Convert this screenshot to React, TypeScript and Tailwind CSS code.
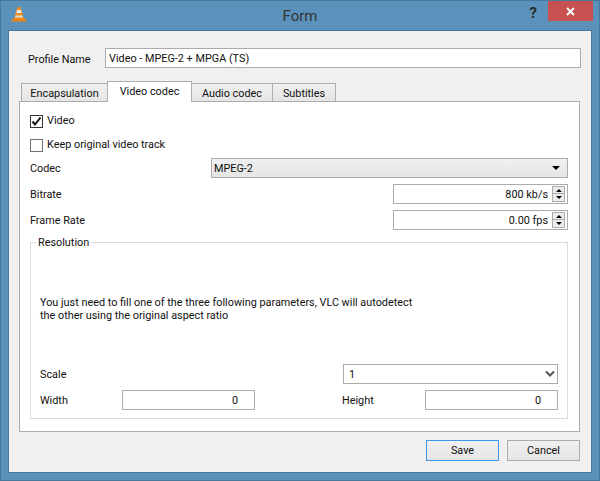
import { ReactNode } from "react"

const font = { fontFamily: 'Roboto, "Open Sans", sans-serif' }

function SpinArrows() {
  return (
    <div className="flex flex-col w-[13px] h-[16px] mr-[2px]">
      <div className="h-[8px] bg-[#ececec] border border-[#acacac] flex items-center justify-center">
        <div className="w-0 h-0 border-x-[3.5px] border-x-transparent border-b-[3px] border-b-black" />
      </div>
      <div className="h-[8px] bg-[#ececec] border border-t-0 border-[#acacac] flex items-center justify-center">
        <div className="w-0 h-0 border-x-[3.5px] border-x-transparent border-t-[3px] border-t-black" />
      </div>
    </div>
  )
}

function Spin({ value, width }: { value: string; width: string }) {
  return (
    <div className={`${width} h-[20px] border border-[#ababab] bg-white flex items-center justify-end`}>
      <span className="mr-[4px] pt-[2px]">{value}</span>
      <SpinArrows />
    </div>
  )
}

function Tab({ label, active, width }: { label: string; active?: boolean; width: string }) {
  if (active) {
    return (
      <div className={`${width} h-[21px] -ml-px relative z-10 bg-white border border-b-0 border-[#acacac] flex items-center justify-center`}>
        {label}
      </div>
    )
  }
  return (
    <div className={`${width} h-[19px] -ml-px bg-gradient-to-b from-[#f0f0f0] to-[#e5e5e5] border border-[#acacac] flex items-center justify-center pt-[3px]`}>
      {label}
    </div>
  )
}

function Check({ checked, children }: { checked?: boolean; children: ReactNode }) {
  return (
    <div className="flex items-center h-[20px]">
      <div className={`w-[13px] h-[13px] border ${checked ? "border-[#333]" : "border-[#707070]"} bg-white flex items-center justify-center mr-[4px]`}>
        {checked && (
          <svg width="11" height="11" viewBox="0 0 11 11">
            <path d="M1.5 5.5 L4 8.5 L9.5 1.5" fill="none" stroke="#111" strokeWidth="2" />
          </svg>
        )}
      </div>
      {children}
    </div>
  )
}

export default function App() {
  return (
    <div
      style={font}
      className="w-[600px] h-[481px] bg-[#5b92bc] border border-[#47799f] flex flex-col text-[10.85px] text-[#111] overflow-hidden"
    >
      {/* Title bar */}
      <div className="h-[29px] grid grid-cols-[1fr_auto_1fr] items-start shrink-0">
        <svg className="ml-[10px] mt-[5px]" width="16" height="17" viewBox="0 0 16 17">
          <path d="M6.5 1 L9.5 1 L13 13 L3 13 Z" fill="#f08a1d" />
          <path d="M6 4 L10 4 L10.7 7 L5.3 7 Z" fill="#e8e8e8" />
          <path d="M4.6 9.5 L11.4 9.5 L12 11.5 L4 11.5 Z" fill="#ddd" />
          <path d="M1 13 L15 13 L15.5 15.5 L0.5 15.5 Z" fill="#ee8210" />
        </svg>
        <div className="text-[15px] text-[#333] mt-[4px]">Form</div>
        <div className="flex justify-end">
          <div className="text-[15px] font-bold text-[#2b2b2b] mt-[2px] mr-[11px] leading-[20px]">?</div>
          <div className="w-[45px] h-[20px] bg-[#c75050] mr-[6px] flex items-center justify-center">
            <svg width="9" height="9" viewBox="0 0 9 9">
              <path d="M1 1 L8 8 M8 1 L1 8" stroke="#fff" strokeWidth="2" />
            </svg>
          </div>
        </div>
      </div>

      {/* Client area */}
      <div className="mx-[7px] h-[443px] border border-[#47799f] bg-[#f0f0f0] flex flex-col px-[10px]">
        <div className="flex items-center mt-[17px] h-[20px]">
          <span className="w-[86px] pl-[9px] pt-[4px] shrink-0">Profile Name</span>
          <div className="w-[476px] h-[20px] border border-[#ababab] bg-white flex items-center pl-[3px] pt-[2px]">
            Video - MPEG-2 + MPGA (TS)
          </div>
        </div>

        {/* Tabs */}
        <div className="flex items-end mt-[13px] ml-[3px] h-[21px] -mb-px relative">
          <Tab label="Encapsulation" width="w-[87px]" />
          <Tab label="Video codec" active width="w-[85px]" />
          <Tab label="Audio codec" width="w-[82px]" />
          <Tab label="Subtitles" width="w-[64px]" />
        </div>
        <div className="w-[561px] h-[331px] border border-[#acacac] bg-white flex flex-col pl-[10px] pr-[11px]">
          <div className="mt-[9px]">
            <Check checked>Video</Check>
          </div>
          <div className="mt-[4px]">
            <Check>Keep original video track</Check>
          </div>

          <div className="flex items-center justify-between mt-[3px] h-[20px]">
            <span className="pt-[2px]">Codec</span>
            <div className="w-[357px] h-[20px] border border-[#acacac] bg-gradient-to-b from-[#f0f0f0] to-[#e5e5e5] flex items-center justify-between pl-[2px] pr-[7px]">
              <span className="pt-[2px]">MPEG-2</span>
              <div className="w-0 h-0 border-x-[4px] border-x-transparent border-t-[4px] border-t-black" />
            </div>
          </div>

          <div className="flex items-center justify-between mt-[6px]">
            <span className="pt-[2px]">Bitrate</span>
            <Spin value="800 kb/s" width="w-[175px]" />
          </div>
          <div className="flex items-center justify-between mt-[6px]">
            <span className="pt-[2px]">Frame Rate</span>
            <Spin value="0.00 fps" width="w-[175px]" />
          </div>

          {/* Resolution group */}
          <div className="relative mt-[12px] h-[177px] border border-[#dcdcdc] px-[9px] flex flex-col">
            <span className="absolute left-[5px] -top-[8px] bg-white px-[2px] leading-[16px]">Resolution</span>
            <div className="mt-[53px] leading-[13px] h-[30px]">
              You just need to fill one of the three following parameters, VLC will autodetect
              <br />
              the other using the original aspect ratio
            </div>
            <div className="flex items-center mt-[38px] h-[20px]">
              <span className="flex-1 pt-[2px]">Scale</span>
              <div className="w-[215px] h-[20px] border border-[#ababab] bg-white flex items-center justify-between pl-[5px] pr-[2px]">
                <span className="pt-[3px]">1</span>
                <svg width="10" height="8" viewBox="0 0 10 8">
                  <path d="M1 1.5 L5 5.5 L9 1.5" fill="none" stroke="#555" strokeWidth="2" />
                </svg>
              </div>
            </div>
            <div className="flex items-center mt-[6px] h-[20px]">
              <span className="w-[82px] pt-[2px]">Width</span>
              <div className="w-[133px] h-[20px] border border-[#ababab] bg-white flex items-center justify-end pr-[16px] pt-[2px]">0</div>
              <span className="w-[170px] pl-[87px] pt-[2px]">Height</span>
              <div className="w-[133px] h-[20px] border border-[#ababab] bg-white flex items-center justify-end pr-[16px] pt-[2px]">0</div>
            </div>
          </div>
        </div>

        {/* Buttons */}
        <div className="flex justify-end gap-[8px] mt-[8px] w-[561px]">
          <div className="w-[73px] h-[21px] border border-[#3c97e8] bg-gradient-to-b from-[#f0f0f0] to-[#e5e5e5] flex items-center justify-center pt-[2px]">Save</div>
          <div className="w-[73px] h-[21px] border border-[#acacac] bg-gradient-to-b from-[#f0f0f0] to-[#e5e5e5] flex items-center justify-center pt-[2px]">Cancel</div>
        </div>
      </div>
    </div>
  )
}
